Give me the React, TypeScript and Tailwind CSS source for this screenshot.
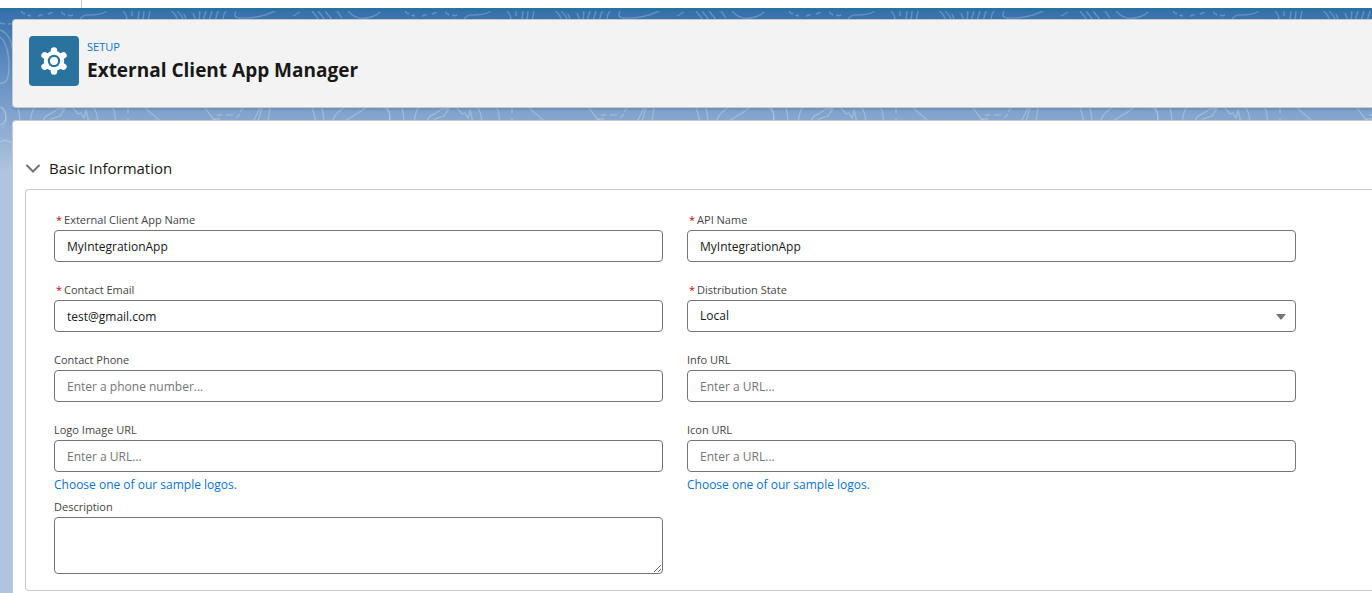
import { useState } from 'react';

type FieldProps = {
  id: string;
  label: string;
  required?: boolean;
  value?: string;
  placeholder?: string;
  type?: string;
};

const controlClass =
  'block w-full h-8 rounded border border-[#747474] bg-white px-3 text-xs text-[#181818] placeholder:text-[#747474]';

function Label({ id, label, required }: { id: string; label: string; required?: boolean }) {
  return (
    <label htmlFor={id} className="block pt-1 pb-px text-[11px] leading-[18px] text-[#444444]">
      {required && <span className="mx-0.5 text-[#ba0517]">*</span>}
      {label}
    </label>
  );
}

function TextField({ id, label, required, value = '', placeholder, type = 'text' }: FieldProps) {
  return (
    <div>
      <Label id={id} label={label} required={required} />
      <input id={id} type={type} defaultValue={value} placeholder={placeholder} className={controlClass} />
    </div>
  );
}

function SampleLogos() {
  return (
    <a href="#logos" className="mt-1 block w-fit text-xs leading-[18px] text-[#0b72ce] hover:underline">
      Choose one of our sample logos.
    </a>
  );
}

// Contour lines, repeated every 384px across the header
function Contours() {
  return (
    <svg className="absolute inset-0 h-full w-full" aria-hidden="true">
      <defs>
        <pattern id="contours" width="384" height="170" patternUnits="userSpaceOnUse">
          <g fill="none" stroke="#ffffff" strokeOpacity="0.22" strokeWidth="1.4">
            <path d="M21 0 Q24 4 31 5 M38 5 L44 3 M48 3 L54 1 M61 1 Q66 6 73 4" strokeDasharray="5 3" />
            <path d="M80 8 Q83 3 91 4 Q101 4 107 0 M123 0 Q127 4 127 10 M132 0 V5 M139 0 L138 10 M144 0 L143 10 M150 0 L148 10" />
            <path d="M171 0 Q176 3 178 10 M177 0 Q182 4 184 10 M184 3 L187 10 M193 2 L196 10 M200 0 L199 10 M206 0 L203 10 M212 0 L209 10 M218 0 L215 10 M226 0 Q222 5 224 10" />
            <path d="M236 0 Q233 7 240 7 Q258 8 275 0 M293 5 L300 1 M312 0 L320 10 M318 0 L326 10 M325 0 L333 10 M337 0 L342 7 M348 0 Q356 9 366 7 Q375 6 380 1" />
            <path d="M0 12 Q4 13 12 13" strokeDasharray="5 3" />
            <path d="M0 19 C8 22 12 30 12 37 M0 26 C6 30 8 40 9 51 C9 61 9 70 3 72 L0 72" />
            <path d="M0 96 C8 98 8 112 0 114 M0 131 C5 128 9 130 12 132 M18 97 Q21 106 19 115" />
            <path d="M34 97 Q29 107 31 116 M44 116 Q41 106 50 103 L58 98 L65 98 L60 105 L51 108 L49 116 M73 97 L78 103 L81 102 L84 107 L86 99 L89 112 M75 112 Q84 109 88 115" />
            <path d="M94 97 Q100 107 96 117 M113 97 Q117 107 114 117 M128 97 V102 M128 107 V116 M145 97 L159 109 L164 116 M205 97 L214 109 L224 112" />
            <path d="M217 104 H222 M214 108 H220 M226 104 H233 M240 101 L243 97 M236 107 L240 103 M250 117 L260 97 M256 117 L262 97 M267 117 L270 97" />
            <path d="M312 97 Q317 107 314 117 M322 97 Q325 107 323 117 M332 117 Q331 104 344 97 M341 117 C345 106 355 106 365 97 M384 97 Q392 107 386 117" />
            <path d="M2 97 Q10 109 2 117" strokeOpacity="0.12" />
          </g>
        </pattern>
      </defs>
      <rect width="100%" height="100%" fill="url(#contours)" />
    </svg>
  );
}

function GearIcon() {
  return (
    <svg viewBox="0 0 50 50" className="h-[50px] w-[50px]" aria-hidden="true">
      <g fill="none" stroke="#ffffff" strokeWidth="6.4" strokeLinecap="round">
        <path d="M25 14.500V35.500M15.500 19.300 34.500 30.700M15.500 30.700 34.500 19.300" />
      </g>
      <circle cx="25" cy="25" r="10.200" fill="#ffffff" />
      <circle cx="25" cy="25" r="5.100" fill="#ffffff" stroke="#2a739e" strokeWidth="2.200" />
    </svg>
  );
}

export default function App() {
  const [open, setOpen] = useState(true);
  const [state, setState] = useState('Local');

  return (
    <div className="flex min-h-screen flex-col bg-[#b0c4df] font-['Open_Sans',sans-serif] text-[#181818]">
      <div className="flex h-2 bg-white">
        <div className="w-[82px] border-r border-[#c9c9c9]" />
      </div>
      <div className="relative flex grow flex-col border-t-[3px] border-[#2a739e] pt-2 pl-3">
        <div className="absolute inset-x-0 top-0 h-[160px] bg-linear-to-b from-[#3670ac] via-[#7ba0cb] via-60% to-[#b0c4df]">
          <Contours />
        </div>

        <header className="relative flex h-[89px] gap-2 rounded-l border border-r-0 border-[#c9c9c9] bg-[#f3f3f3] p-4 shadow-[0_2px_2px_rgba(0,0,0,0.1)]">
          <div className="h-[50px] w-[50px] rounded bg-[#2a739e]">
            <GearIcon />
          </div>
          <div>
            <p className="pt-0.5 text-[11px] leading-[18px] text-[#0b72ce]">SETUP</p>
            <h1 className="text-[19px] leading-7 font-bold">External Client App Manager</h1>
          </div>
        </header>

        <main className="relative mt-3 grow rounded-tl border border-r-0 border-b-0 border-[#c9c9c9] bg-white pt-[33px] pb-0.5 pl-3">
          <button
            type="button"
            aria-expanded={open}
            onClick={() => setOpen(!open)}
            className="flex h-7 items-center gap-2 text-[15px]"
          >
            <svg viewBox="0 0 16 16" className="h-4 w-4" fill="none" stroke="#747474" strokeWidth="2" strokeLinecap="round" aria-hidden="true">
              <path d="M2 5.500 8 11.500 14 5.500" />
            </svg>
            Basic Information
          </button>

          {open && (
            <form className="mt-[7px] rounded-l border border-r-0 border-[#c9c9c9] pt-[17px] pr-[76px] pb-4 pl-7">
              <div className="grid grid-cols-2 gap-x-6 gap-y-[15px]">
                <TextField id="app-name" label="External Client App Name" required value="MyIntegrationApp" />
                <TextField id="api-name" label="API Name" required value="MyIntegrationApp" />
                <TextField id="email" label="Contact Email" required type="email" value="test@gmail.com" />
                <div>
                  <Label id="state" label="Distribution State" required />
                  <div className="relative">
                    <select id="state" value={state} onChange={(e) => setState(e.target.value)} className={`${controlClass} appearance-none`}>
                      <option>Local</option>
                      <option>Packaged</option>
                    </select>
                    <svg viewBox="0 0 10 6" className="pointer-events-none absolute top-3.5 right-2.5 h-1.5 w-2.5" fill="#747474" aria-hidden="true">
                      <path d="M0 0H10L5 6Z" />
                    </svg>
                  </div>
                </div>
                <TextField id="phone" label="Contact Phone" type="tel" placeholder="Enter a phone number..." />
                <TextField id="info-url" label="Info URL" type="url" placeholder="Enter a URL..." />
                <div>
                  <TextField id="logo-url" label="Logo Image URL" type="url" placeholder="Enter a URL..." />
                  <SampleLogos />
                </div>
                <div>
                  <TextField id="icon-url" label="Icon URL" type="url" placeholder="Enter a URL..." />
                  <SampleLogos />
                </div>
              </div>
              <div className="grid grid-cols-2 gap-x-6">
                <div>
                  <Label id="description" label="Description" />
                  <textarea
                    id="description"
                    className="block h-[57px] w-full resize-y rounded border border-[#747474] bg-white px-3 py-2 text-xs"
                  />
                </div>
              </div>
            </form>
          )}
        </main>
      </div>
    </div>
  );
}
